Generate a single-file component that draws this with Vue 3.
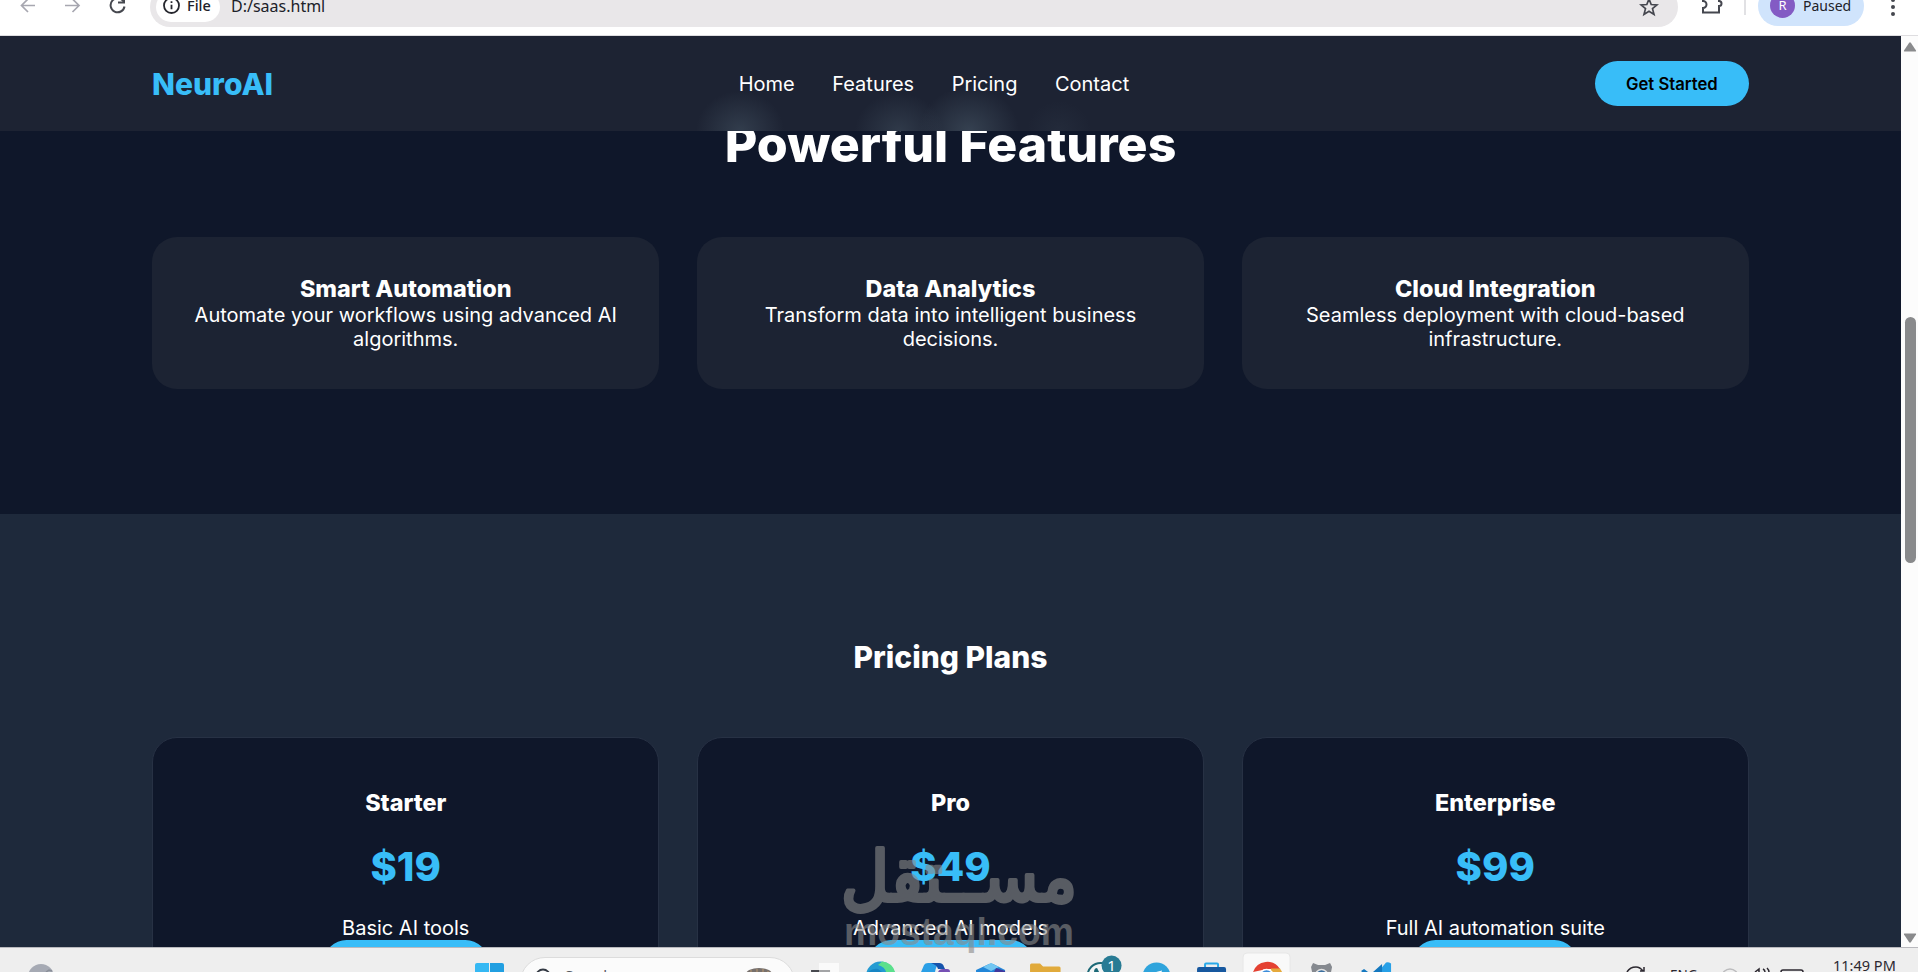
<template>
  <div class="window">
    <header class="toolbar">
      <div class="nav-icons">
        <svg class="muted" width="44" height="40" viewBox="0 0 44 40"><path d="M35 18.500H21.500M28 12l-6.500 6.500 6.500 6.500" /></svg>
        <svg class="muted" width="44" height="40" viewBox="0 0 44 40"><path d="M21 18.500h14M28.500 12l6.500 6.500-6.500 6.500" /></svg>
        <svg width="62" height="40" viewBox="0 0 62 40"><path d="M35.500 14.500a7 7 0 1 0 1 5" /><path d="M36 9.500v6h-6" /></svg>
      </div>
      <div class="omnibox">
        <div class="chip">
          <svg width="17" height="17" viewBox="0 0 17 17"><circle cx="8.500" cy="8.500" r="7.500" /><path d="M8.500 7.700v4.600M8.500 4.300v1.800" /></svg>
          <span>File</span>
        </div>
        <span class="url">D:/saas.html</span>
        <svg class="star" width="20" height="20" viewBox="0 0 20 20"><path d="M10 2l2.200 5.500 5.800.4-4.500 3.700 1.500 5.800-5-3.200-5 3.200 1.500-5.800L2 7.900l5.800-.4z" /></svg>
      </div>
      <svg class="puzzle" width="24" height="28" viewBox="0 0 24 28"><path d="M3 6h5a3 3 0 0 1 6 0h5v5a2.500 2.500 0 0 1 0 5v6.500H3v-4.500a3.500 3.500 0 0 0 0-7z" /></svg>
      <span class="divider"></span>
      <div class="profile"><span class="avatar">R</span><span>Paused</span></div>
      <svg class="dots" width="6" height="24" viewBox="0 0 6 24"><circle cx="3" cy="1" r="2" /><circle cx="3" cy="8" r="2" /><circle cx="3" cy="15" r="2" /></svg>
    </header>

    <div class="viewport">
      <div class="page">
        <nav class="navbar">
          <div class="logo">NeuroAI</div>
          <ul class="links">
            <li v-for="link in links" :key="link">{{ link }}</li>
          </ul>
          <button class="btn">Get Started</button>
        </nav>

        <section class="features">
          <h2 class="title">Powerful Features</h2>
          <div class="grid">
            <div v-for="feature in features" :key="feature.title" class="card">
              <h3>{{ feature.title }}</h3>
              <p>{{ feature.text }}</p>
            </div>
          </div>
        </section>

        <section class="pricing">
          <h2>Pricing Plans</h2>
          <div class="grid">
            <div v-for="plan in plans" :key="plan.name" class="plan">
              <h3>{{ plan.name }}</h3>
              <div class="price">{{ plan.price }}</div>
              <p>{{ plan.text }}</p>
              <button class="btn plan-btn"></button>
            </div>
          </div>
        </section>
      </div>

      <div class="scrollbar">
        <svg width="17" height="17" viewBox="0 0 17 17"><path d="M8 7L3 14.500q-.5 1 .5 1h11q1 0 .5-1L10 7q-1-1.300-2 0z" /></svg>
        <div class="thumb"></div>
        <svg width="17" height="17" viewBox="0 0 17 17"><path d="M8 12L3 4.500q-.5-1 .5-1h11q1 0 .5 1L10 12q-1 1.300-2 0z" /></svg>
      </div>
    </div>

    <footer class="taskbar">
      <svg class="weather" width="28" height="24" viewBox="0 0 28 24"><circle cx="14" cy="29" r="13" fill="#a6aab4" /><path d="M19 24l3-2 3 1" stroke="#8a8f99" stroke-width="1.500" fill="none" /></svg>
      <svg class="start" width="29" height="24" viewBox="0 0 29 24"><path d="M0 17q0-2 2-2h12v9H0z" fill="#35b8f3" /><path d="M15 15h12q2 0 2 2v7H15z" fill="#219fe1" /></svg>
      <div class="search">
        <svg width="20" height="16" viewBox="0 0 20 16"><circle cx="9" cy="18.500" r="7" fill="none" stroke="#333943" stroke-width="1.800" /></svg>
        <span>Search</span>
        <svg class="beads" width="28" height="16" viewBox="0 0 28 16"><ellipse cx="14" cy="16" rx="13" ry="6" fill="#77706c" /><path d="M6 12v4M12 11v5M18 11v5M23 13v3" stroke="#a58b6d" stroke-width="1.500" /></svg>
      </div>
      <div class="apps">
        <svg viewBox="0 0 55 24"><path d="M13 22h18v2H13z" fill="#47494e" /><path d="M21 15h20v9H21z" fill="#fafafa" /><path d="M21 22h11v2H21z" fill="#a3a4a6" /></svg>
        <!-- Edge -->
        <svg viewBox="0 0 55 24"><circle cx="27.500" cy="28" r="14.500" fill="#249bd2" /><path d="M29 13.600q10 1 13 10.400h-9q-1-5-8-7z" fill="#5be08c" /><path d="M15 24q5-4 10-3l4 3z" fill="#1785c4" /></svg>
        <!-- Copilot -->
        <svg viewBox="0 0 55 24"><path d="M13 24l3-7q1-2 4-2h12q-4 2-5 9z" fill="#2b9fe6" /><path d="M23 15h8q4 0 5 4l1 2h-7q-1-4-7-6z" fill="#1553ac" /><path d="M30 24q1-3 5-3h4q3 0 3 3z" fill="#7651b4" /></svg>
        <svg viewBox="0 0 55 24"><path d="M13 22l13-6q2-1 4 0l12 6v2H13z" fill="#2186d8" /><path d="M20 19l8-4 8 4-8 4z" fill="#71c6f2" /><path d="M33 20l9 3v1H31z" fill="#41379c" /></svg>
        <svg viewBox="0 0 55 24"><path d="M12 24v-7q0-1.500 1.500-1.500H22l3 3h16q1.500 0 1.500 1.500v4z" fill="#e1aa3b" /></svg>
        <!-- WhatsApp -->
        <svg viewBox="0 0 55 24"><circle cx="27.500" cy="28" r="13" fill="#f3f5f5" stroke="#1c6977" stroke-width="2" /><path d="M21 24q0-4 3-4l2 4" fill="#1c6977" /><circle cx="38.500" cy="17.500" r="10" fill="#287b94" /><text x="38.500" y="22.500" text-anchor="middle" fill="#fff">1</text></svg>
        <svg viewBox="0 0 55 24"><circle cx="27.500" cy="28.500" r="14" fill="#2fa4dc" /><path d="M27 24l6-1.500-.5 1.500z" fill="#fff" /></svg>
        <svg viewBox="0 0 55 24"><path d="M21 20v-3.500q0-1 1-1h11q1 0 1 1V20" fill="none" stroke="#29a9e9" stroke-width="2" /><path d="M13 24v-3q0-2 2-2h25q2 0 2 2v3z" fill="#17589f" /></svg>
        <!-- Chrome, active window -->
        <svg viewBox="0 0 55 24"><path d="M4 24V9q0-4 4-4h39q4 0 4 4v15" fill="#f9f9f9" stroke="#e7e7e7" /><path d="M14 24a15 15 0 0 1 27-3H28z" fill="#e44132" /><path d="M32 20.500h9l2 3.500H32z" fill="#e5a93c" /><circle cx="27.500" cy="28.500" r="7" fill="#3c8dda" stroke="#fff" stroke-width="1.500" /></svg>
        <svg viewBox="0 0 55 24"><path d="M18 24l-1-5 2-4 5 2h7l5-2 2 4-1 5z" fill="#85898f" /><circle cx="27.500" cy="27.500" r="6" fill="#3c6f9e" stroke="#e2e2e2" stroke-width="1.500" /></svg>
        <svg viewBox="0 0 55 24"><path d="M29 24l8-9.500q2-1 5 1v8.500z" fill="#27a0e7" /><path d="M12 23l3-2 4 3h-6zM24 24l9-8v8z" fill="#1478bf" /></svg>
      </div>
      <div class="tray">
        <svg width="24" height="24" viewBox="0 0 24 24"><path d="M2 24q3-5 9-5 4 0 7 4M19 19v4h-4" /></svg>
        <span class="lang">ENG</span>
        <svg class="faint" width="18" height="24" viewBox="0 0 18 24"><circle cx="9" cy="29" r="8" /></svg>
        <svg width="20" height="24" viewBox="0 0 20 24"><path d="M3 24l4-3v3M11 21q2 1 2 3M15 20q2 2 2 4" /></svg>
        <svg width="26" height="24" viewBox="0 0 26 24"><path d="M2 24q0-2 2-2h18q2 0 2 2" /></svg>
        <span class="clock">11:49 PM</span>
      </div>
    </footer>

    <svg class="watermark" width="234" height="116" viewBox="0 0 234 116">
      <text class="wm-ar" x="117" y="59" text-anchor="middle" textLength="236" lengthAdjust="spacingAndGlyphs">مســتقل</text>
      <text class="wm-en" x="2" y="103" textLength="230" lengthAdjust="spacingAndGlyphs">mostaql.com</text>
    </svg>
  </div>
</template>

<script setup>
const links = ['Home', 'Features', 'Pricing', 'Contact'];

const features = [
  { title: 'Smart Automation', text: 'Automate your workflows using advanced AI algorithms.' },
  { title: 'Data Analytics', text: 'Transform data into intelligent business decisions.' },
  { title: 'Cloud Integration', text: 'Seamless deployment with cloud-based infrastructure.' }
];

const plans = [
  { name: 'Starter', price: '$19', text: 'Basic AI tools' },
  { name: 'Pro', price: '$49', text: 'Advanced AI models' },
  { name: 'Enterprise', price: '$99', text: 'Full AI automation suite' }
];
</script>

<style>
body {
  margin: 0;
  overflow: hidden;
}
</style>

<style scoped>
* {
  box-sizing: border-box;
  margin: 0;
  padding: 0;
}

svg {
  display: block;
  flex: none;
}

.window {
  position: relative;
  display: flex;
  flex-direction: column;
  width: 1918px;
  height: 972px;
  overflow: hidden;
  font-family: "Inter", sans-serif;
}

/* Browser toolbar */
.toolbar {
  display: flex;
  align-items: flex-end;
  flex: none;
  height: 36px;
  padding-bottom: 8px;
  overflow: hidden;
  background: #fff;
  border-bottom: 1px solid #dedde0;
  font-family: "Noto Sans", sans-serif;
  font-size: 15px;
  color: #202128;
}

.nav-icons {
  display: flex;
  width: 150px;
  height: 40px;
}

.nav-icons svg {
  fill: none;
  stroke: #46484f;
  stroke-width: 2;
}

.nav-icons .muted {
  stroke: #a7a7b0;
  stroke-width: 1.7;
}

.omnibox {
  display: flex;
  align-items: center;
  width: 1528px;
  height: 40px;
  padding: 0 19px 0 6px;
  border-radius: 20px;
  background: #e9e7e9;
}

.chip {
  display: flex;
  align-items: center;
  gap: 7px;
  width: 64px;
  height: 30px;
  padding: 0 0 3px 7px;
  border-radius: 15px;
  background: #fff;
  font-size: 14.500px;
  font-weight: 500;
}

.chip svg {
  fill: none;
  stroke: #25262d;
  stroke-width: 1.8;
}

.chip span {
  padding-bottom: 2px;
}

.url {
  padding: 0 0 2px 11px;
  font-size: 16px;
}

.star {
  margin-left: auto;
  fill: none;
  stroke: #45474f;
  stroke-width: 1.7;
}

.puzzle {
  margin: 0 0 9px 22px;
  fill: none;
  stroke: #45474f;
  stroke-width: 2;
}

.divider {
  width: 2px;
  height: 24px;
  margin: 0 12px 12px 20px;
  background: #e1e1e4;
}

.profile {
  display: flex;
  align-items: center;
  gap: 8px;
  width: 106px;
  height: 40px;
  margin-bottom: 1px;
  padding: 0 0 2px 12px;
  border-radius: 20px;
  background: #d0e4fc;
  font-size: 14px;
}

.avatar {
  width: 25px;
  height: 25px;
  border-radius: 50%;
  background: #835bc4;
  color: #fff;
  font-size: 13px;
  line-height: 25px;
  text-align: center;
}

.dots {
  margin: 0 0 4px 26px;
  fill: #45474f;
  overflow: visible;
}

/* Page */
.viewport {
  display: flex;
  flex: none;
  height: 911px;
  overflow: hidden;
}

.page {
  flex: 1;
  overflow: hidden;
  background: #0f172a;
  color: #fff;
  font-size: 20px;
}

.navbar {
  position: relative;
  z-index: 2;
  display: flex;
  align-items: center;
  justify-content: space-between;
  height: 95px;
  margin-bottom: -95px;
  padding: 0 8%;
  background:
    radial-gradient(44px 40px at 740px 95px, rgba(90, 110, 125, 0.35), transparent),
    radial-gradient(44px 38px at 899px 95px, rgba(90, 110, 125, 0.3), transparent),
    radial-gradient(50px 44px at 969px 95px, rgba(90, 110, 125, 0.4), transparent),
    radial-gradient(32px 30px at 1059px 95px, rgba(90, 110, 125, 0.1), transparent),
    #1d2333;
}

.logo {
  font-size: 30px;
  font-weight: 800;
  color: #38bdf8;
}

.links {
  display: flex;
  gap: 37.500px;
  list-style: none;
}

.btn {
  height: 45px;
  padding: 0 31.250px;
  border: none;
  border-radius: 37.500px;
  background: #38bdf8;
  color: #000;
  font-family: inherit;
  font-size: 16.667px;
  font-weight: 600;
}

.features {
  height: 478px;
  padding: 78px 8% 0;
  text-align: center;
}

h2 {
  margin-bottom: 62px;
  font-size: 30px;
  line-height: 36px;
  font-weight: 800;
}

.title {
  margin-bottom: 62.500px;
  font-size: 50px;
  line-height: 60.500px;
}

.grid {
  display: grid;
  grid-template-columns: repeat(3, 1fr);
  gap: 37.500px;
}

.card {
  height: 152px;
  padding: 37.500px;
  border-radius: 25px;
  background: #1c2333;
}

h3 {
  font-size: 23.400px;
  line-height: 28px;
  font-weight: 800;
}

p {
  line-height: 24px;
}

.pricing {
  padding: 125px 8%;
  background: #1e293b;
  text-align: center;
}

.plan {
  padding: 50.500px 50px;
  border: 1px solid #273144;
  border-radius: 25px;
  background: #0f172a;
}

.price {
  margin: 26px 0 25px;
  font-size: 40px;
  line-height: 48px;
  font-weight: 800;
  color: #38bdf8;
}

.plan-btn {
  display: block;
  width: 164px;
  margin: 0 auto;
}

.scrollbar {
  display: flex;
  flex-direction: column;
  align-items: flex-end;
  justify-content: space-between;
  width: 17px;
  background: #fcfcfc;
}

.scrollbar svg {
  fill: #898a8c;
}

.thumb {
  width: 11px;
  height: 246px;
  margin: 0 2px 104px 0;
  border-radius: 6px;
  background: #898a8c;
}

/* Taskbar */
.taskbar {
  display: flex;
  flex: none;
  height: 25px;
  overflow: hidden;
  background: #eee;
  border-top: 1px solid #b9b9be;
  font-family: "Noto Sans", sans-serif;
}

.weather {
  margin-left: 27px;
}

.start {
  margin-left: 420px;
}

.search {
  display: flex;
  width: 275px;
  height: 50px;
  margin: 9px 0 0 16px;
  padding: 0 21px 0 13px;
  border: 1px solid #dcdcdc;
  border-radius: 25px;
  background: #fbfbfb;
  font-size: 15px;
  color: #555960;
}

.search span {
  margin: 7px 0 0 11px;
}

.beads {
  margin-left: auto;
}

.apps {
  display: flex;
  margin-left: 3px;
}

.apps svg {
  width: 55.100px;
  height: 24px;
}

.apps text {
  font-size: 15px;
}

.tray {
  display: flex;
  margin-left: 221px;
  color: #2c2830;
}

.tray svg {
  fill: none;
  stroke: #2c2830;
  stroke-width: 1.5;
}

.tray .faint {
  margin-right: 13px;
  stroke: #bcbcbe;
}

.lang {
  width: 53px;
  padding: 18px 0 0 21px;
  margin-right: 19px;
  font-size: 13.500px;
}

.tray svg:nth-of-type(3) {
  margin-right: 7px;
}

.clock {
  width: 64px;
  margin: 7px 0 0 28px;
  font-size: 14.500px;
  line-height: 20px;
  white-space: nowrap;
}

/* Watermark over the page */
.watermark {
  position: absolute;
  left: 842px;
  top: 842px;
  fill: #8a8a8a;
  opacity: 0.6;
  overflow: visible;
}

.wm-ar {
  font-family: "DejaVu Sans", sans-serif;
  font-size: 70px;
  stroke: #8a8a8a;
  stroke-width: 4;
  stroke-linejoin: round;
}

.wm-en {
  font-family: "Liberation Sans", sans-serif;
  font-size: 38px;
  font-weight: 700;
}
</style>
